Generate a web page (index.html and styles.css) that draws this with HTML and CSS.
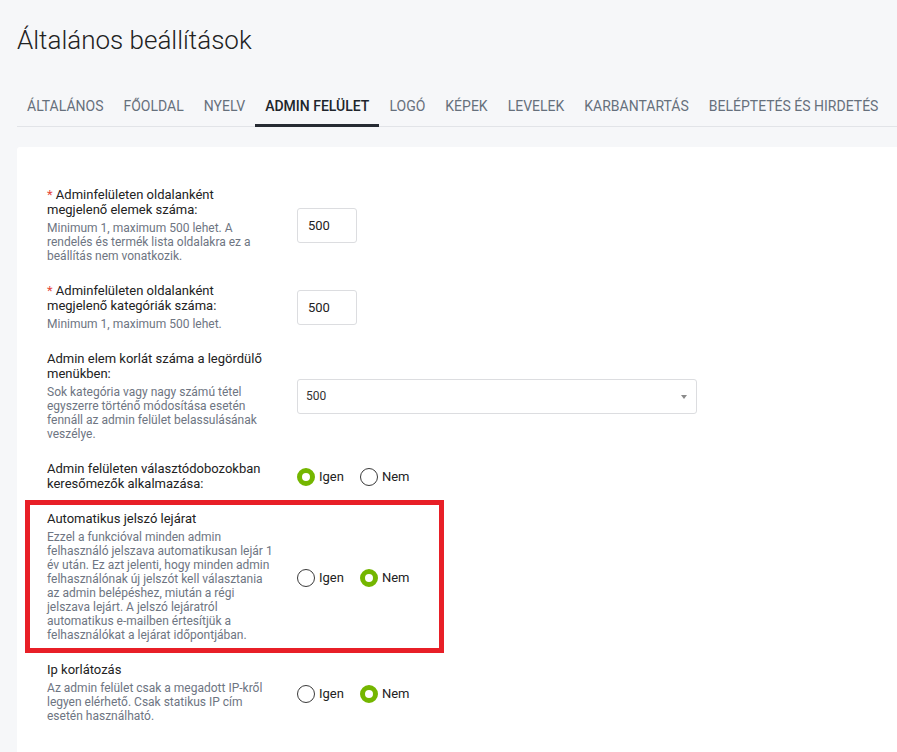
FILE: index.html
```html
<!DOCTYPE html>
<html lang="hu">
<head>
<meta charset="utf-8">
<title>Általános beállítások</title>
<link rel="stylesheet" href="styles.css">
</head>
<body>
<div class="page">
  <h1 class="page-title">Általános beállítások</h1>

  <nav class="tabs">
    <a class="tab">ÁLTALÁNOS</a>
    <a class="tab">FŐOLDAL</a>
    <a class="tab">NYELV</a>
    <a class="tab tab--active">ADMIN FELÜLET</a>
    <a class="tab">LOGÓ</a>
    <a class="tab">KÉPEK</a>
    <a class="tab">LEVELEK</a>
    <a class="tab">KARBANTARTÁS</a>
    <a class="tab">BELÉPTETÉS ÉS HIRDETÉS</a>
  </nav>

  <div class="card">
    <div class="row">
      <div class="field-info">
        <div class="field-label field-label--required">Adminfelületen oldalanként megjelenő elemek száma:</div>
        <div class="field-help">Minimum 1, maximum 500 lehet. A rendelés és termék lista oldalakra ez a beállítás nem vonatkozik.</div>
      </div>
      <div class="field-control">
        <input class="num-input" type="text" value="500">
      </div>
    </div>

    <div class="row">
      <div class="field-info">
        <div class="field-label field-label--required">Adminfelületen oldalanként megjelenő kategóriák száma:</div>
        <div class="field-help">Minimum 1, maximum 500 lehet.</div>
      </div>
      <div class="field-control">
        <input class="num-input" type="text" value="500">
      </div>
    </div>

    <div class="row">
      <div class="field-info">
        <div class="field-label">Admin elem korlát száma a legördülő menükben:</div>
        <div class="field-help">Sok kategória vagy nagy számú tétel egyszerre történő módosítása esetén fennáll az admin felület belassulásának veszélye.</div>
      </div>
      <div class="field-control">
        <div class="select-wrap">
          <select class="select">
            <option>500</option>
          </select>
          <span class="select-arrow"></span>
        </div>
      </div>
    </div>

    <div class="row">
      <div class="field-info">
        <div class="field-label">Admin felületen választódobozokban keresőmezők alkalmazása:</div>
      </div>
      <div class="field-control radio-group">
        <label class="radio"><input type="radio" name="search" checked>Igen</label>
        <label class="radio"><input type="radio" name="search">Nem</label>
      </div>
    </div>

    <div class="row row--flagged">
      <div class="field-info">
        <div class="field-label">Automatikus jelszó lejárat</div>
        <div class="field-help">Ezzel a funkcióval minden admin felhasználó jelszava automatikusan lejár 1 év után. Ez azt jelenti, hogy minden admin felhasználónak új jelszót kell választania az admin belépéshez, miután a régi jelszava lejárt. A jelszó lejáratról automatikus e-mailben értesítjük a felhasználókat a lejárat időpontjában.</div>
      </div>
      <div class="field-control radio-group">
        <label class="radio"><input type="radio" name="expire">Igen</label>
        <label class="radio"><input type="radio" name="expire" checked>Nem</label>
      </div>
    </div>

    <div class="row">
      <div class="field-info">
        <div class="field-label">Ip korlátozás</div>
        <div class="field-help">Az admin felület csak a megadott IP-kről legyen elérhető. Csak statikus IP cím esetén használható.</div>
      </div>
      <div class="field-control radio-group">
        <label class="radio"><input type="radio" name="ip">Igen</label>
        <label class="radio"><input type="radio" name="ip" checked>Nem</label>
      </div>
    </div>
  </div>
</div>
</body>
</html>
```

FILE: styles.css
```css
* {
  box-sizing: border-box;
}

html, body {
  margin: 0;
  height: 100%;
}

body {
  background: #f6f7f9;
  font-family: Roboto, "Liberation Sans", Arial, sans-serif;
  color: #222;
  overflow: hidden;
}

.page {
  padding: 24px 0 0 17px;
  min-height: 100%;
  display: flex;
  flex-direction: column;
}

.page-title {
  margin: 0;
  font-size: 26px;
  line-height: 32px;
  font-weight: 300;
  color: #222;
}

/* Tab bar */
.tabs {
  display: flex;
  margin-top: 32px;
  border-bottom: 1px solid #e2e4e8;
  white-space: nowrap;
}

.tab {
  padding: 10px 10px;
  font-size: 14px;
  line-height: 16px;
  color: #66707c;
  border-bottom: 3px solid transparent;
  margin-bottom: -1px;
  cursor: pointer;
}

.tab--active {
  color: #20252b;
  font-weight: 500;
  border-bottom-color: #262b33;
}

/* Settings card */
.card {
  flex: 1;
  margin-top: 20px;
  background: #fff;
  border-radius: 3px 0 0 0;
  padding: 30px 0 40px 9px;
}

.row {
  display: flex;
  align-items: center;
  padding: 10px 0 10px 21px;
}

.row--flagged {
  width: 417px;
  outline: 5px solid #e81f27;
  outline-offset: -4px;
}

.field-info {
  width: 230px;
  flex: none;
}

.field-label {
  font-size: 13px;
  line-height: 15px;
  color: #222;
}

/* required marker */
.field-label--required::before {
  content: "* ";
  color: #e5473b;
}

.field-help {
  margin-top: 4px;
  font-size: 12px;
  line-height: 14px;
  color: #6e7582;
}

.field-control {
  margin-left: 20px;
}

/* Inputs */
.num-input {
  display: block;
  width: 60px;
  height: 35px;
  padding: 0 0 0 10px;
  border: 1px solid #dcdde0;
  border-radius: 3px;
  font-family: inherit;
  font-size: 13px;
  color: #222;
  background: #fff;
  outline: none;
}

.select-wrap {
  position: relative;
  width: 400px;
}

.select {
  display: block;
  width: 100%;
  height: 35px;
  padding: 0 24px 0 8px;
  border: 1px solid #dcdde0;
  border-radius: 3px;
  background: #fff;
  font-family: inherit;
  font-size: 12px;
  color: #333;
  appearance: none;
  -webkit-appearance: none;
  outline: none;
}

.select-arrow {
  position: absolute;
  right: 10px;
  top: 16px;
  width: 0;
  height: 0;
  border-left: 3px solid transparent;
  border-right: 3px solid transparent;
  border-top: 4px solid #8a8a8a;
  pointer-events: none;
}

/* Radio buttons */
.radio-group {
  display: flex;
  align-items: center;
  gap: 16px;
  padding-top: 2px;
}

.radio {
  display: flex;
  align-items: center;
  gap: 4px;
  font-size: 13px;
  line-height: 18px;
  color: #222;
  cursor: pointer;
}

.radio input {
  appearance: none;
  -webkit-appearance: none;
  margin: 0;
  width: 18px;
  height: 18px;
  border: 1.5px solid #3a3a3a;
  border-radius: 50%;
  background: #fff;
}

.radio input:checked {
  border: 5px solid #74b600;
}
```
